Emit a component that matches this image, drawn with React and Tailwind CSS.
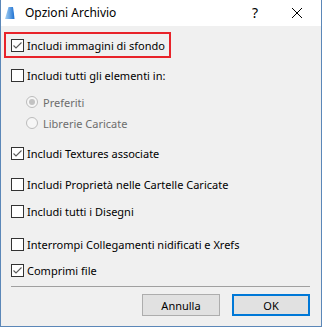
import { useState } from "react";

function CheckBox({ checked }) {
  return (
    <div className="w-[13px] h-[13px] shrink-0 border border-[#333333] bg-white flex items-center justify-center">
      {checked && (
        <svg width="11" height="11" viewBox="0 0 11 11">
          <path d="M1.5 5.5 L4 8 L9.5 2.5" fill="none" stroke="#5a5a5a" strokeWidth="1.1" />
        </svg>
      )}
    </div>
  );
}

function Radio({ selected }) {
  return (
    <div className="w-[12px] h-[12px] shrink-0 rounded-full border border-[#bcbcbc] bg-[#f6f6f6] flex items-center justify-center">
      {selected && <div className="w-[6px] h-[6px] rounded-full bg-[#c2c2c2]" />}
    </div>
  );
}

function Row({ checked, label, className = "" }) {
  return (
    <div className={`flex items-center h-[13px] pl-[10px] ${className}`}>
      <CheckBox checked={checked} />
      <span className="ml-[3px] leading-none whitespace-nowrap">{label}</span>
    </div>
  );
}

function RadioRow({ selected, label, className = "" }) {
  return (
    <div className={`flex items-center h-[12px] pl-[25px] text-[#6d6d6d] ${className}`}>
      <Radio selected={selected} />
      <span className="ml-[5px] leading-none whitespace-nowrap">{label}</span>
    </div>
  );
}

export default function App() {
  const [opts] = useState({
    sfondo: true,
    tutti: false,
    textures: true,
    proprieta: false,
    disegni: false,
    interrompi: false,
    comprimi: true,
  });

  return (
    <div
      className="w-[322px] h-[327px] flex flex-col bg-[#f0f0f0] border-l border-r border-b border-[#5b87b8] text-[11px] text-black"
      style={{ fontFamily: '"Noto Sans", "Liberation Sans", sans-serif' }}
    >
      {/* title bar */}
      <div className="h-[26px] bg-white flex items-center shrink-0">
        <svg width="12" height="14" viewBox="0 0 12 14" className="ml-[3px]">
          <defs>
            <linearGradient id="ac" x1="0" y1="0" x2="1" y2="0">
              <stop offset="0" stopColor="#a9d4f5" />
              <stop offset="1" stopColor="#1c6fd1" />
            </linearGradient>
          </defs>
          <path d="M1 13 L4.5 1 L9 1 Q10 7 10.5 13 Z" fill="url(#ac)" />
        </svg>
        <span className="ml-[9px] text-[12px]">Opzioni Archivio</span>
        <span className="ml-auto text-[14px] leading-none mr-[33px]">?</span>
        <svg width="12" height="12" viewBox="0 0 12 12" className="mr-[18px]">
          <path d="M1 1 L11 11 M11 1 L1 11" stroke="#000" strokeWidth="1" />
        </svg>
      </div>

      {/* content */}
      <div className="flex flex-col flex-1">
        <div className="mt-[6px] ml-[3px] w-[167px] h-[26px] border-2 border-[#e8232a] flex items-center pl-[5px]">
          <CheckBox checked={opts.sfondo} />
          <span className="ml-[3px] leading-none whitespace-nowrap">Includi immagini di sfondo</span>
        </div>
        <Row className="mt-[11px]" checked={opts.tutti} label="Includi tutti gli elementi in:" />
        <RadioRow className="mt-[14px]" selected label="Preferiti" />
        <RadioRow className="mt-[9px]" label="Librerie Caricate" />
        <Row className="mt-[18px]" checked={opts.textures} label="Includi Textures associate" />
        <Row className="mt-[18px]" checked={opts.proprieta} label="Includi Proprietà nelle Cartelle Caricate" />
        <Row className="mt-[14px]" checked={opts.disegni} label="Includi tutti i Disegni" />
        <Row className="mt-[20px]" checked={opts.interrompi} label="Interrompi Collegamenti nidificati e Xrefs" />
        <Row className="mt-[13px]" checked={opts.comprimi} label="Comprimi file" />

        <div className="mt-[9px] ml-[10px] mr-[11px] h-px bg-[#a0a0a0]" />

        <div className="mt-[7px] flex justify-end gap-[12px] mr-[11px]">
          <button className="w-[78px] h-[22px] bg-[#e1e1e1] border border-[#adadad] leading-none">
            Annulla
          </button>
          <button className="w-[78px] h-[22px] bg-[#e1e1e1] border-2 border-[#0078d7] leading-none">
            OK
          </button>
        </div>
      </div>
    </div>
  );
}
